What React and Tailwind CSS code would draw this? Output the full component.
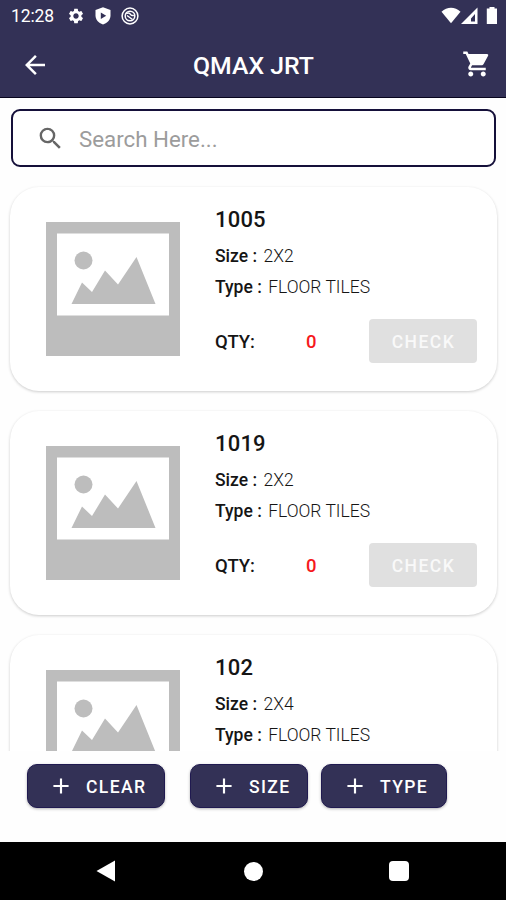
import { MdAdd, MdArrowBack, MdSearch, MdSettings, MdShoppingCart } from 'react-icons/md';

// the last row is cut by the list's edge before its stock line
const produtos = [
  { code: '1005', size: '2X2', type: 'FLOOR TILES', qty: 0 },
  { code: '1019', size: '2X2', type: 'FLOOR TILES', qty: 0 },
  { code: '102', size: '2X4', type: 'FLOOR TILES' },
];

function StatusBar() {
  return (
    <div className="flex h-8 items-center justify-between pl-[11px] pr-2">
      <div className="flex items-center">
        <span className="w-[44px] pt-px text-[17.5px] leading-none tracking-[-0.1px]">12:28</span>
        <MdSettings className="ml-3 h-[18px] w-[18px]" />
        <svg viewBox="0 0 18 18" className="ml-[9px] h-[18px] w-[18px]">
          <path d="M9 .3 16.500 3v5.500c0 4-2.800 7.400-7.500 9-4.700-1.600-7.500-5-7.500-9V3Z" fill="white" />
          <path d="m6.800 5.400 5.400 3.300-5.400 3.300Z" fill="#333156" />
        </svg>
        <svg viewBox="0 0 18 18" className="ml-[9px] h-[18px] w-[18px]" fill="none" stroke="white">
          <circle cx="9" cy="9" r="7.900" strokeWidth="1.500" />
          <circle cx="9" cy="9" r="4.800" strokeWidth="1.500" />
          <path d="M5.200 6.600c2-1 3.500-.4 4.300.8s2 1.400 3.300 1M6 8.500l5.500 4" strokeWidth="1.500" />
        </svg>
      </div>
      <div className="flex items-center">
        <svg viewBox="0 0 20 18" className="h-[18px] w-5">
          <path d="M.500 4.700C6-.700 14-.700 19.500 4.700L10 16.200Z" fill="white" />
        </svg>
        <svg viewBox="0 0 17 18" className="h-[18px] w-[17px]">
          <path fillRule="evenodd" d="M0 17 16.500.5V17ZM10 14.500h4V7l-4 4.500Z" fill="white" />
        </svg>
        <svg viewBox="0 0 12 18" className="ml-2 h-[18px] w-3">
          <path d="M3.500 0h5v1.500H11v15.500H.8V1.500h2.700Z" fill="white" />
        </svg>
      </div>
    </div>
  );
}

function Placeholder() {
  return (
    <svg viewBox="0 0 134 134" className="h-[134px] w-[134px] flex-none">
      <path d="M0 0h134v134H0Z" fill="#bdbdbd" />
      <path d="M11 11.500h112v82H11Z" fill="white" />
      <circle cx="37.500" cy="38.500" r="9" fill="#bdbdbd" />
      <path d="m25.500 82 10.500-21.500 10 9.500 13-21.500 13 14L90.500 35 109.500 82Z" fill="#bdbdbd" />
    </svg>
  );
}

function ProductCard({ item }) {
  return (
    <div className="flex h-[204px] flex-none rounded-[29px] bg-white pl-9 pr-5 pt-[35px] shadow-[0_1px_3px_rgba(0,0,0,0.2)]">
      <Placeholder />
      <div className="-mt-[14px] ml-[35px] flex-1">
        <p className="h-6 text-[22px] font-medium leading-6 tracking-[0.2px]">{item.code}</p>
        <p className="mt-3 h-[25px] text-[17.5px] leading-[25px]">
          <span className="font-medium">Size : </span>
          <span className="ml-0.5 font-light tracking-[0.1px]">{item.size}</span>
        </p>
        <p className="mt-1.5 h-[25px] text-[17.5px] leading-[25px]">
          <span className="font-medium">Type : </span>
          <span className="ml-0.5 font-light">{item.type}</span>
        </p>
        {item.qty !== undefined && (
          <div className="mt-[19px] flex h-11 items-center text-[18.5px] font-medium">
            <span className="w-[91px] pt-[3px]">QTY:</span>
            <span className="pt-[3px] text-[#f6191c]">{item.qty}</span>
            <button className="ml-auto h-11 w-[108px] rounded bg-[#e0e0e0] pl-px pt-[3px] text-[17.5px] tracking-[1.500px] text-[#f9f9f9]">
              CHECK
            </button>
          </div>
        )}
      </div>
    </div>
  );
}

function FilterButton({ label, className }) {
  return (
    <button
      className={`flex h-11 items-center rounded-[10px] border border-[#201a50] bg-[#333156] pl-5 text-[17.5px] font-medium tracking-[1.400px] text-white shadow-[0_1px_3px_rgba(0,0,0,0.3)] ${className}`}
    >
      <MdAdd className="mr-3 h-[26px] w-[26px]" />
      <span className="pt-0.5">{label}</span>
    </button>
  );
}

export default function App() {
  return (
    <div className="flex h-[900px] w-[506px] flex-col overflow-hidden bg-[#fefefe] font-['Roboto',sans-serif] text-[#151515]">
      <header className="h-[98px] flex-none border-b border-[#08051e] bg-[#333156] text-white">
        <StatusBar />
        <div className="flex h-[65px] items-center justify-between pl-5 pr-[14px]">
          <MdArrowBack className="h-[30px] w-[30px]" />
          <h1 className="mr-[5px] pt-[3px] text-[24.800px] font-medium">QMAX JRT</h1>
          <MdShoppingCart className="mb-0.5 h-[30px] w-[30px]" />
        </div>
      </header>

      <div className="ml-[11px] mr-[10px] mt-[11px] flex h-[58px] flex-none items-center rounded-[9px] border-2 border-[#15103a] bg-white pl-[23px]">
        <MdSearch className="h-[29px] w-[29px] text-[#666]" />
        <span className="ml-[14px] pt-[3px] text-[22.300px] text-[#9c9c9c]">Search Here...</span>
      </div>

      <main className="flex h-[584px] flex-none flex-col gap-5 overflow-hidden pl-[10px] pr-[9px] pt-5">
        {produtos.map((p) => (
          <ProductCard key={p.code} item={p} />
        ))}
      </main>

      <div className="flex h-[91px] flex-none pl-[27px] pt-[13px]">
        <FilterButton label="CLEAR" className="w-[138px]" />
        <FilterButton label="SIZE" className="ml-[25px] w-[118px]" />
        <FilterButton label="TYPE" className="ml-[13px] w-[126px]" />
      </div>

      <nav className="flex flex-1 items-center bg-black text-white">
        <svg viewBox="0 0 20 22" className="ml-[96px] h-[22px] w-5" fill="white">
          <path d="M19 .5v21L.5 11Z" />
        </svg>
        <div className="ml-[128px] h-[19px] w-[19px] rounded-full bg-white" />
        <div className="ml-[126px] h-5 w-5 rounded-sm bg-white" />
      </nav>
    </div>
  );
}
